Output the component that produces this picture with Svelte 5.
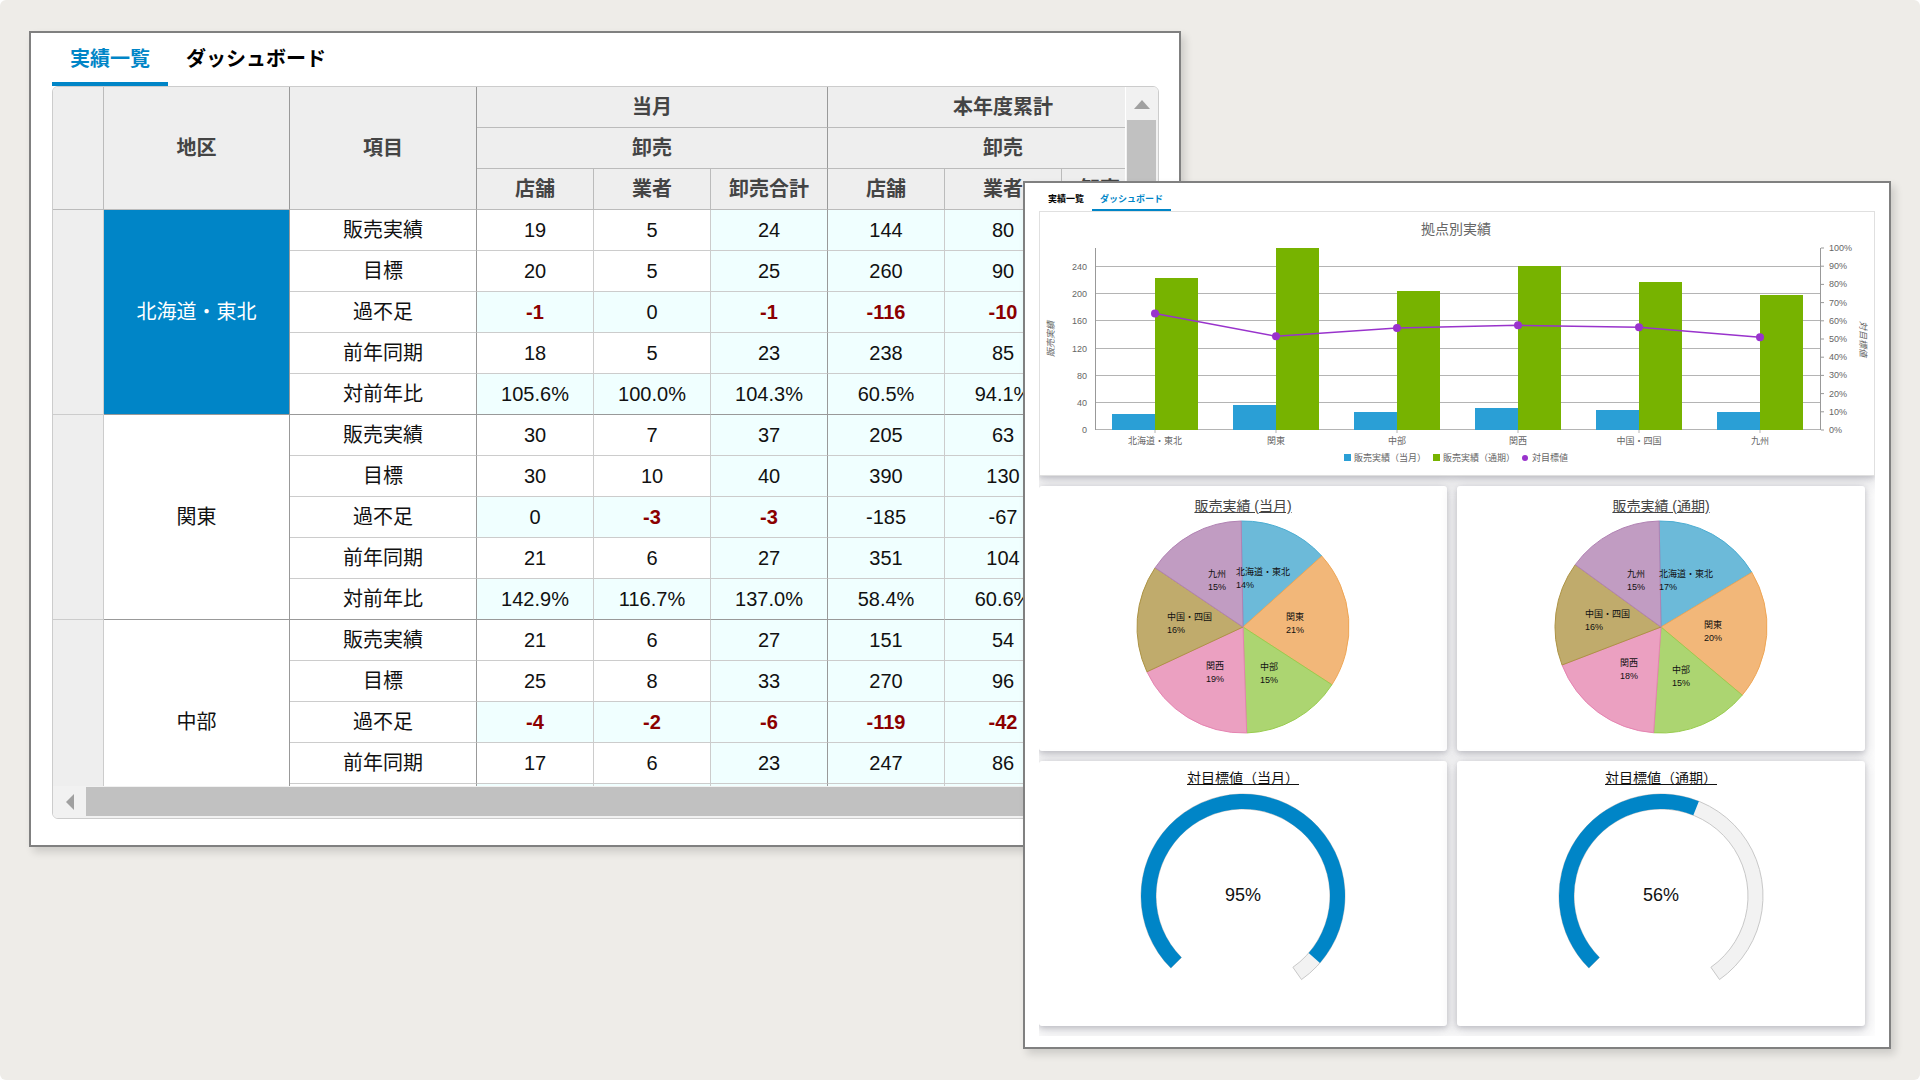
<script>
  const metrics = ["販売実績", "目標", "過不足", "前年同期", "対前年比"];
  const periods = ["当月", "本年度累計"];
  const channels = ["店舗", "業者", "卸売合計"];

  const areas = [
    {
      name: "北海道・東北",
      selected: true,
      rows: [
        ["19", "5", "24", "144", "80", "224"],
        ["20", "5", "25", "260", "90", "350"],
        ["-1", "0", "-1", "-116", "-10", "-126"],
        ["18", "5", "23", "238", "85", "323"],
        ["105.6%", "100.0%", "104.3%", "60.5%", "94.1%", "69.3%"],
      ],
      alerts: [0, 2, 3, 4, 5],
    },
    {
      name: "関東",
      rows: [
        ["30", "7", "37", "205", "63", "268"],
        ["30", "10", "40", "390", "130", "520"],
        ["0", "-3", "-3", "-185", "-67", "-252"],
        ["21", "6", "27", "351", "104", "455"],
        ["142.9%", "116.7%", "137.0%", "58.4%", "60.6%", "58.9%"],
      ],
      alerts: [1, 2],
    },
    {
      name: "中部",
      rows: [
        ["21", "6", "27", "151", "54", "205"],
        ["25", "8", "33", "270", "96", "366"],
        ["-4", "-2", "-6", "-119", "-42", "-161"],
        ["17", "6", "23", "247", "86", "333"],
        ["123.5%", "100.0%", "117.4%", "61.1%", "62.8%", "61.6%"],
      ],
      alerts: [0, 1, 2, 3, 4, 5],
    },
  ];

  // 集計列と過不足・対前年比の行は計算セル
  function isCalc(r, c) {
    return c > 1 || r === 2 || r === 4;
  }

  // 棒グラフ
  const plot = { left: 55, right: 781, top: 36, base: 218, max: 268 };
  const bars = [
    { name: "北海道・東北", month: 24, year: 224, rate: 64 },
    { name: "関東", month: 37, year: 268, rate: 51.5 },
    { name: "中部", month: 27, year: 205, rate: 56 },
    { name: "関西", month: 33, year: 241, rate: 57.5 },
    { name: "中国・四国", month: 29, year: 218, rate: 56.5 },
    { name: "九州", month: 27, year: 199, rate: 51 },
  ];
  const step = (plot.right - plot.left) / bars.length;
  const barWidth = 43;
  const cx = (i) => Math.floor(plot.left + step * (i + 0.5));
  const barHeight = (v) => Math.round((v / plot.max) * (plot.base - plot.top));
  const rateY = (v) => plot.base - (v / 100) * (plot.base - plot.top);
  const leftTicks = [0, 40, 80, 120, 160, 200, 240];
  const rightTicks = [0, 10, 20, 30, 40, 50, 60, 70, 80, 90, 100];
  const linePoints = bars.map((b, i) => `${cx(i)},${rateY(b.rate)}`).join(" ");

  // 円グラフ
  const colors = [
    ["#6cbad9", "#4badd2"],
    ["#f2b779", "#efa655"],
    ["#acd571", "#99cc4f"],
    ["#eba0c1", "#e584b1"],
    ["#c0ab6c", "#ad9344"],
    ["#c19cc2", "#b182b3"],
  ];
  const pies = [
    {
      title: "販売実績 (当月)",
      angles: [-1, 48, 123, 178, 245, 304, 359],
      labels: [
        ["北海道・東北", "14%", 197, 59],
        ["関東", "21%", 247, 104],
        ["中部", "15%", 221, 154],
        ["関西", "19%", 167, 153],
        ["中国・四国", "16%", 128, 104],
        ["九州", "15%", 169, 61],
      ],
    },
    {
      title: "販売実績 (通期)",
      angles: [-1, 59, 130, 184, 249, 306, 359],
      labels: [
        ["北海道・東北", "17%", 202, 61],
        ["関東", "20%", 247, 112],
        ["中部", "15%", 215, 157],
        ["関西", "18%", 163, 150],
        ["中国・四国", "16%", 128, 101],
        ["九州", "15%", 170, 61],
      ],
    },
  ];

  function polar(x, y, r, deg) {
    const rad = ((deg - 90) * Math.PI) / 180;
    return `${(x + r * Math.cos(rad)).toFixed(2)} ${(y + r * Math.sin(rad)).toFixed(2)}`;
  }

  function slice(from, to) {
    return `M204 111 L${polar(204, 111, 106, from)} A106 106 0 0 1 ${polar(204, 111, 106, to)} Z`;
  }

  // ゲージ
  const gauges = [
    { title: "対目標値（当月）", value: 95 },
    { title: "対目標値（通期）", value: 56 },
  ];

  function arc(from, to) {
    const big = to - from > 180 ? 1 : 0;
    return (
      `M${polar(204, 108, 102, from)} A102 102 0 ${big} 1 ${polar(204, 108, 102, to)} ` +
      `L${polar(204, 108, 87, to)} A87 87 0 ${big} 0 ${polar(204, 108, 87, from)} Z`
    );
  }
</script>

<main class="stage">
  <section class="window list-window">
    <nav class="tabs">
      <button class="tab active">実績一覧</button>
      <button class="tab">ダッシュボード</button>
    </nav>

    <div class="sheet">
      <div class="viewport">
        <table>
          <colgroup>
            <col class="w-head" />
            <col class="w-area" />
            <col class="w-item" />
            {#each { length: 6 } as _}
              <col class="w-num" />
            {/each}
          </colgroup>
          <thead>
            <tr>
              <th rowspan="3"></th>
              <th rowspan="3" class="edge">地区</th>
              <th rowspan="3" class="edge">項目</th>
              {#each periods as period}
                <th colspan="3" class="edge">{period}</th>
              {/each}
            </tr>
            <tr>
              {#each periods as period}
                <th colspan="3" class="edge">卸売</th>
              {/each}
            </tr>
            <tr>
              {#each periods as period}
                {#each channels as channel, i}
                  <th class:edge={i === 2}>{channel}</th>
                {/each}
              {/each}
            </tr>
          </thead>
          <tbody>
            {#each areas as area}
              {#each area.rows as row, r}
                <tr class:last={r === 4}>
                  {#if r === 0}
                    <th rowspan="5"></th>
                    <td rowspan="5" class="area edge" class:selected={area.selected}>{area.name}</td>
                  {/if}
                  <td class="edge">{metrics[r]}</td>
                  {#each row as value, c}
                    <td
                      class:calc={isCalc(r, c)}
                      class:edge={c === 2}
                      class:alert={r === 2 && area.alerts.includes(c)}
                    >{value}</td>
                  {/each}
                </tr>
              {/each}
            {/each}
          </tbody>
        </table>
      </div>
      <div class="vscroll">
        <button class="arrow" aria-label="上へ">
          <svg width="16" height="9" viewBox="0 0 16 9"><path d="M0 9 L8 0 L16 9 Z" /></svg>
        </button>
        <div class="thumb"></div>
      </div>
      <div class="hscroll">
        <button class="arrow" aria-label="左へ">
          <svg width="8" height="16" viewBox="0 0 8 16"><path d="M8 0 L0 8 L8 16 Z" /></svg>
        </button>
        <div class="thumb"></div>
      </div>
      <div class="corner"></div>
    </div>
  </section>

  <section class="window board-window">
    <nav class="tabs small">
      <button class="tab">実績一覧</button>
      <button class="tab active">ダッシュボード</button>
    </nav>

    <div class="board">
      <div class="card chart-card">
        <svg class="chart" viewBox="0 0 834 263">
          <text class="chart-title" x="416" y="22" text-anchor="middle">拠点別実績</text>

          {#each leftTicks as t}
            {@const y = plot.base - barHeight(t) - 0.5}
            <line class="grid" x1={plot.left} x2={plot.right} y1={y} y2={y} />
            <text x="47" y={y + 3} text-anchor="end">{t}</text>
          {/each}
          {#each rightTicks as t}
            {@const y = rateY(t)}
            <line class="axis" x1={plot.right} x2={plot.right + 3} y1={y} y2={y} />
            <text x="789" y={y + 3}>{t}%</text>
          {/each}
          <line class="axis" x1={plot.left + 0.5} x2={plot.left + 0.5} y1={plot.top} y2={plot.base} />
          <line class="axis" x1={plot.right - 0.5} x2={plot.right - 0.5} y1={plot.top} y2={plot.base} />

          {#each bars as b, i}
            <rect
              class="month"
              x={cx(i) - barWidth}
              y={plot.base - barHeight(b.month)}
              width={barWidth}
              height={barHeight(b.month)}
            />
            <rect
              class="year"
              x={cx(i)}
              y={plot.base - barHeight(b.year)}
              width={barWidth}
              height={barHeight(b.year)}
            />
            <line class="grid" x1={cx(i)} x2={cx(i)} y1={plot.base} y2={plot.base + 3} />
            <text x={cx(i)} y="232" text-anchor="middle">{b.name}</text>
          {/each}

          <polyline class="rate-line" points={linePoints} />
          {#each bars as b, i}
            <circle class="rate" cx={cx(i)} cy={rateY(b.rate)} r="4" />
          {/each}

          <text class="axis-title" transform="translate(14 127) rotate(-90)" text-anchor="middle">販売実績</text>
          <text class="axis-title" transform="translate(820 127) rotate(90)" text-anchor="middle">対目標値</text>

          <rect class="month" x="304" y="242" width="7" height="7" />
          <text x="314" y="249">販売実績（当月）</text>
          <rect class="year" x="393" y="242" width="7" height="7" />
          <text x="403" y="249">販売実績（通期）</text>
          <circle class="rate" cx="485" cy="246" r="3" />
          <text x="492" y="249">対目標値</text>
        </svg>
      </div>

      {#each pies as pie}
        <div class="card">
          <h3>{pie.title}</h3>
          <svg class="pie" viewBox="0 0 408 235">
            {#each colors as [fill, stroke], i}
              <path d={slice(pie.angles[i], pie.angles[i + 1])} {fill} {stroke} />
            {/each}
            {#each pie.labels as [name, share, x, y]}
              <text {x} {y}>{name}</text>
              <text {x} y={y + 13}>{share}</text>
            {/each}
          </svg>
        </div>
      {/each}

      {#each gauges as gauge}
        <div class="card gauge-card">
          <h3>{gauge.title}</h3>
          <svg class="gauge" viewBox="0 0 408 238">
            <path class="track" d={arc(225, 505)} />
            <path class="value" d={arc(225, 225 + 2.8 * gauge.value)} />
            <text x="204" y="113" text-anchor="middle">{gauge.value}%</text>
          </svg>
        </div>
      {/each}
    </div>
  </section>
</main>

<style>
  :global(body) {
    margin: 0;
    background: #fff;
  }

  .stage {
    box-sizing: border-box;
    min-height: 100vh;
    padding-top: 31px;
    padding-bottom: 31px;
    border-radius: 6px;
    background: #eeece8;
    display: grid;
    grid-template-columns: 29fr minmax(0, 994fr) minmax(0, 158fr) minmax(0, 710fr) 29fr;
    grid-template-rows: 150px auto;
    align-items: start;
    font-family: "Liberation Sans", "Noto Sans CJK JP", sans-serif;
    color: #111;
  }

  .window {
    box-sizing: border-box;
    background: #fff;
    border: 2px solid #808080;
    box-shadow: 4px 5px 8px rgba(0, 0, 0, 0.14);
  }
  .list-window {
    grid-column: 2 / 4;
    grid-row: 1 / 3;
    padding: 0 20px 26px 21px;
  }
  .board-window {
    grid-column: 3 / 5;
    grid-row: 2;
    padding: 0 14px 11px;
    z-index: 1;
  }

  /* タブ */
  .tabs {
    display: flex;
    height: 53px;
  }
  .tab {
    box-sizing: border-box;
    border: none;
    border-bottom: 4px solid transparent;
    padding: 0 18px;
    background: none;
    font-family: inherit;
    font-size: 20px;
    font-weight: bold;
    color: #000;
    cursor: pointer;
  }
  .tab.active {
    color: #0085c7;
    border-bottom-color: #0085c7;
  }
  .tabs.small {
    height: 28px;
    padding-left: 1px;
  }
  .small .tab {
    border-bottom-width: 2px;
    padding: 4px 8px 0;
    font-size: 9px;
  }

  /* 一覧表 */
  .sheet {
    display: grid;
    grid-template-columns: minmax(0, 1fr) 33px;
    grid-template-rows: 699px 32px;
    border: 1px solid #ccc;
    border-radius: 6px;
    overflow: hidden;
  }
  .viewport {
    overflow: hidden;
  }
  table {
    table-layout: fixed;
    width: 1126px;
    border-collapse: separate;
    border-spacing: 0;
    font-size: 20px;
    line-height: 30px;
    text-align: center;
  }
  .w-head { width: 51px; }
  .w-area { width: 186px; }
  .w-item { width: 187px; }
  .w-num { width: 117px; }

  th, td {
    box-sizing: border-box;
    height: 41px;
    padding: 0;
    border-right: 1px solid #ccc;
    border-bottom: 1px solid #ccc;
    white-space: nowrap;
  }
  th {
    background: #eee;
    color: #444;
  }
  thead th {
    border-color: #bbb;
  }
  .edge, thead .edge {
    border-right-color: #999;
  }
  .calc {
    background: #f0ffff;
  }
  .alert {
    color: #8b0000;
    font-weight: bold;
  }
  .area, .last td {
    border-bottom-color: #999;
  }
  .selected {
    background: #0085c7;
    color: #fff;
  }

  .vscroll, .hscroll, .corner {
    background: #f1f1f1;
  }
  .vscroll {
    display: flex;
    flex-direction: column;
    padding: 0 2px 0 1px;
    border-left: 1px solid #fff;
  }
  .hscroll {
    display: flex;
    padding: 1px 0 2px;
  }
  .arrow {
    flex: none;
    display: flex;
    align-items: center;
    justify-content: center;
    width: 33px;
    padding: 0;
    border: none;
    background: none;
  }
  .vscroll .arrow {
    width: 100%;
    height: 33px;
    padding-top: 2px;
  }
  .arrow path {
    fill: #a0a0a0;
  }
  .thumb {
    background: #c1c1c1;
  }
  .vscroll .thumb {
    height: 360px;
  }
  .hscroll .thumb {
    flex: 1;
  }

  /* ダッシュボード */
  .board {
    display: grid;
    grid-template-columns: 1fr 1fr;
    gap: 10px;
    padding: 0 10px 10px 0;
    overflow: hidden;
  }
  .card {
    background: #fff;
    border-radius: 3px;
    box-shadow: 0 2px 5px rgba(50, 50, 70, 0.2), 0 4px 14px 3px rgba(50, 50, 70, 0.16);
  }
  .chart-card {
    grid-column: 1 / 3;
    margin-right: -10px;
    border: 1px solid #e0e0e0;
    border-radius: 0;
  }
  .card h3 {
    margin: 0;
    padding-top: 10px;
    text-align: center;
    font-size: 14px;
    line-height: 20px;
    font-weight: normal;
    text-decoration: underline;
    color: #444;
  }
  .card.gauge-card h3 {
    padding-top: 7px;
    color: #111;
  }

  svg {
    display: block;
  }
  .chart, .pie, .gauge {
    width: 100%;
  }
  .chart text {
    font-size: 9px;
    fill: #666;
  }
  .chart .chart-title {
    font-size: 14px;
  }
  .chart .axis-title {
    font-style: italic;
  }
  .grid {
    stroke: #b4b4b4;
  }
  .axis {
    stroke: #999;
  }
  .month { fill: #2a9fd6; }
  .year { fill: #77b300; }
  .rate { fill: #9933cc; }
  .rate-line {
    fill: none;
    stroke: #9933cc;
    stroke-width: 1.5;
  }
  .pie text {
    font-size: 9px;
    fill: #111;
  }
  .gauge text {
    font-size: 18px;
    fill: #111;
  }
  .track {
    fill: #f2f2f2;
    stroke: #c8c8c8;
  }
  .value {
    fill: #0085c7;
  }
</style>
